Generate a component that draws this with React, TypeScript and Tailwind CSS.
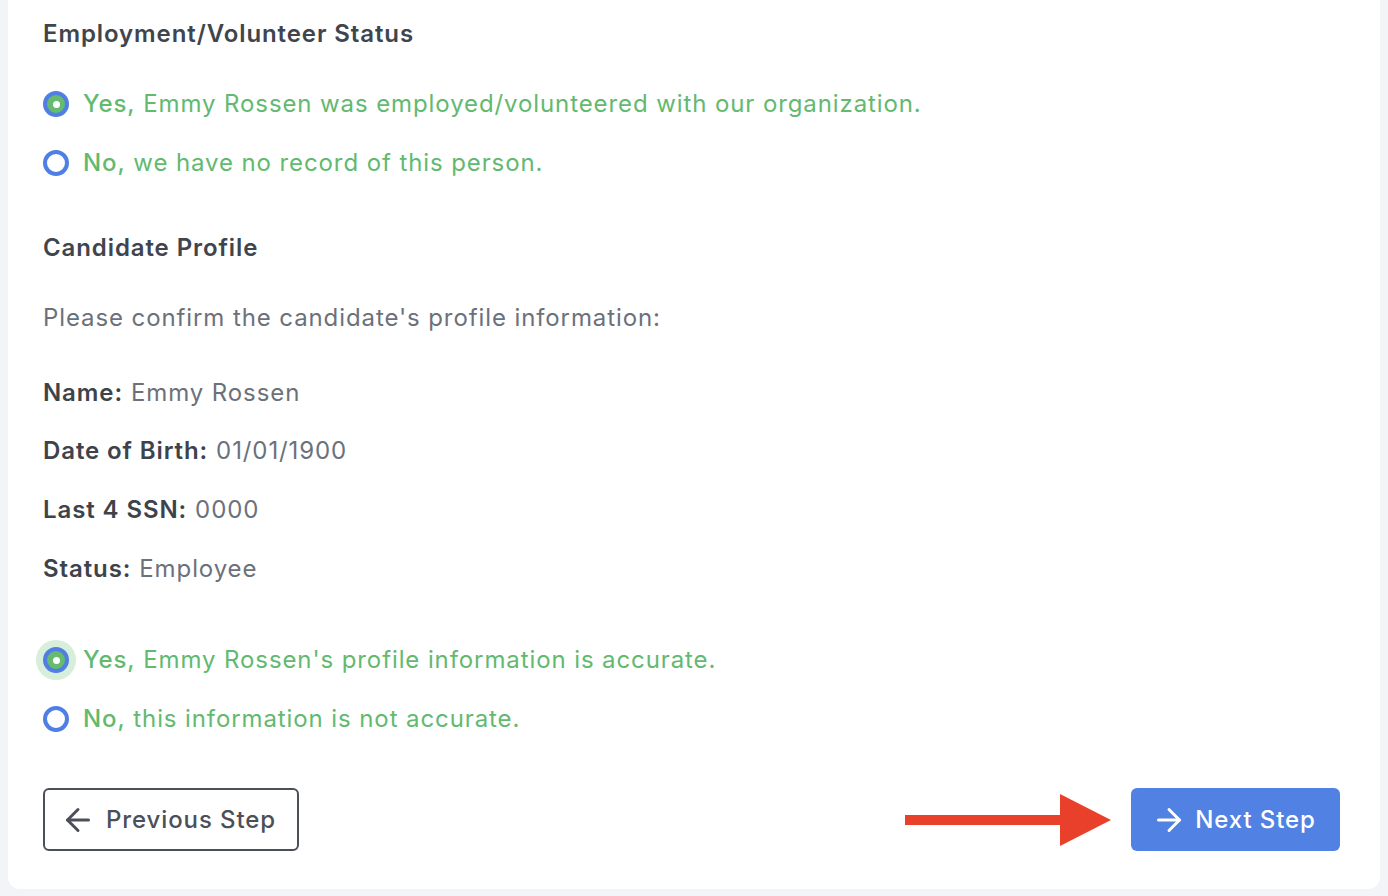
import { ArrowLeft, ArrowRight } from "lucide-react";

const font = { fontFamily: "Inter, 'Noto Sans', sans-serif" };

function Radio({ checked, focused }: { checked?: boolean; focused?: boolean }) {
  return (
    <span className="relative flex h-[26px] w-[26px] shrink-0 items-center justify-center">
      {focused && <span className="absolute -inset-[7px] rounded-full bg-[#d7eedb]" />}
      <span
        className={`relative flex h-[26px] w-[26px] items-center justify-center rounded-full border-[4px] border-[#4f7fe3] ${
          checked ? "bg-[#66bb6f]" : "bg-white"
        }`}
      >
        {checked && <span className="h-[7px] w-[7px] rounded-full bg-white" />}
      </span>
    </span>
  );
}

function Option({ lead, text, checked, focused, className }: { lead: string; text: string; checked?: boolean; focused?: boolean; className: string }) {
  return (
    <label className={`flex h-[44px] items-center gap-[14px] text-[24px] tracking-[0.9px] text-[#62b96f] ${className}`}>
      <Radio checked={checked} focused={focused} />
      <span>
        <span className="font-medium">{lead}</span> {text}
      </span>
    </label>
  );
}

function Field({ label, value, className }: { label: string; value: string; className: string }) {
  return (
    <p className={`flex h-[36px] items-center text-[24px] tracking-[0.9px] ${className}`}>
      <span className="font-semibold text-[#3e434b]">{label}</span>
      <span className="ml-[8px] text-[#6b717b]">{value}</span>
    </p>
  );
}

export default function App() {
  return (
    <div className="min-h-[896px] bg-[#f3f4f8] pl-[8px] pr-[8px]" style={font}>
      <div className="rounded-b-[12px] bg-white pl-[35px] pr-[40px] pt-[16px] pb-[38px]">
        {/* Employment */}
        <h2 className="flex h-[36px] items-center text-[24px] font-semibold tracking-[0.9px] text-[#40454d]">Employment/Volunteer Status</h2>
        <Option className="mt-[30px]" lead="Yes," text="Emmy Rossen was employed/volunteered with our organization." checked />
        <Option className="mt-[15px]" lead="No," text="we have no record of this person." />

        {/* Candidate Profile */}
        <h2 className="mt-[45px] flex h-[36px] items-center text-[24px] font-semibold tracking-[0.9px] text-[#40454d]">Candidate Profile</h2>
        <p className="mt-[34px] flex h-[36px] items-center text-[24px] tracking-[0.9px] text-[#6b717b]">Please confirm the candidate's profile information:</p>

        <Field className="mt-[39px]" label="Name:" value="Emmy Rossen" />
        <Field className="mt-[22px]" label="Date of Birth:" value="01/01/1900" />
        <Field className="mt-[23px]" label="Last 4 SSN:" value="0000" />
        <Field className="mt-[23px]" label="Status:" value="Employee" />

        <Option className="mt-[51px]" lead="Yes," text="Emmy Rossen's profile information is accurate." checked focused />
        <Option className="mt-[15px]" lead="No," text="this information is not accurate." />

        {/* Actions */}
        <div className="mt-[47px] flex items-center justify-between">
          <button className="flex h-[63px] w-[256px] items-center justify-center gap-[10px] rounded-[6px] border-2 border-[#4b5058] text-[24px] font-medium tracking-[0.9px] text-[#4b5058]">
            <ArrowLeft size={36} strokeWidth={2} className="-ml-[6px]" />
            Previous Step
          </button>
          <div className="flex items-center">
            <svg width="206" height="52" viewBox="0 0 206 52" className="mr-[20px]">
              <rect x="0" y="21" width="160" height="10" fill="#e8402a" />
              <polygon points="155,0 206,26 155,52" fill="#e8402a" />
            </svg>
            <button className="flex h-[63px] w-[209px] items-center justify-center gap-[8px] rounded-[6px] bg-[#5181e2] text-[24px] font-medium tracking-[0.9px] text-white">
              <ArrowRight size={36} strokeWidth={2} className="-ml-[4px]" />
              Next Step
            </button>
          </div>
        </div>
      </div>
    </div>
  );
}
